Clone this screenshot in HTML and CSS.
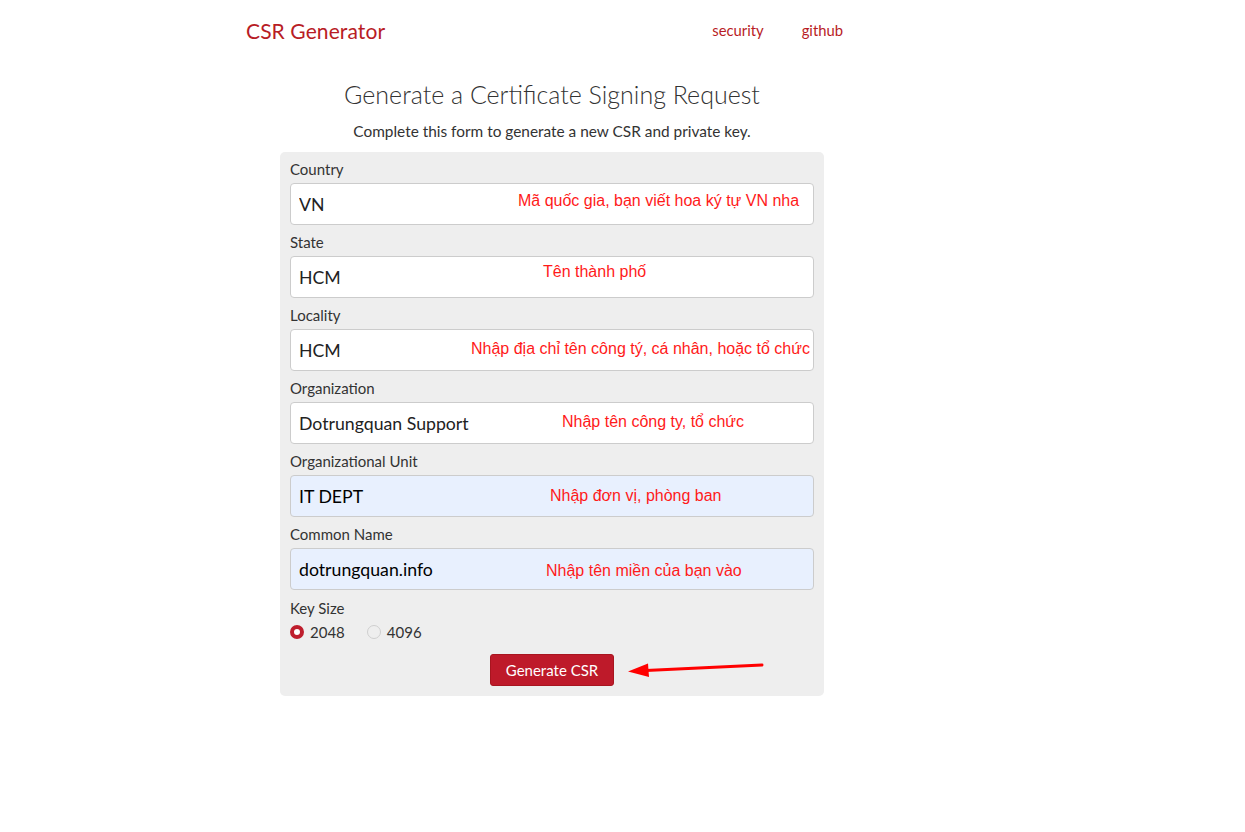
FILE: index.html
```html
<!DOCTYPE html>
<html lang="vi">
<head>
<meta charset="utf-8">
<title>CSR Generator</title>
<link rel="stylesheet" href="styles.css">
</head>
<body>
<div class="page">
  <header class="navbar">
    <a class="brand" href="#">CSR Generator</a>
    <nav class="nav-links">
      <a href="#">security</a>
      <a href="#">github</a>
    </nav>
  </header>
  <main class="main">
    <h1 class="title">Generate a Certificate Signing Request</h1>
    <p class="lead">Complete this form to generate a new CSR and private key.</p>
    <form class="panel">
      <div class="group">
        <label class="label">Country</label>
        <div class="field">
          <input class="input" type="text" value="VN">
          <span class="note note-country">Mã quốc gia, bạn viết hoa ký tự VN nha</span>
        </div>
      </div>
      <div class="group">
        <label class="label">State</label>
        <div class="field">
          <input class="input" type="text" value="HCM">
          <span class="note note-state">Tên thành phố</span>
        </div>
      </div>
      <div class="group">
        <label class="label">Locality</label>
        <div class="field">
          <input class="input" type="text" value="HCM">
          <span class="note note-locality">Nhập địa chỉ tên công tý, cá nhân, hoặc tổ chức</span>
        </div>
      </div>
      <div class="group">
        <label class="label">Organization</label>
        <div class="field">
          <input class="input" type="text" value="Dotrungquan Support">
          <span class="note note-org">Nhập tên công ty, tổ chức</span>
        </div>
      </div>
      <div class="group">
        <label class="label">Organizational Unit</label>
        <div class="field">
          <input class="input input-filled" type="text" value="IT DEPT">
          <span class="note note-unit">Nhập đơn vị, phòng ban</span>
        </div>
      </div>
      <div class="group">
        <label class="label">Common Name</label>
        <div class="field">
          <input class="input input-filled" type="text" value="dotrungquan.info">
          <span class="note note-cn">Nhập tên miền của bạn vào</span>
        </div>
      </div>
      <div class="keysize">
        <label class="label">Key Size</label>
        <div class="radios">
          <label class="radio"><span class="dot dot-on"></span>2048</label>
          <label class="radio"><span class="dot"></span>4096</label>
        </div>
      </div>
      <div class="actions">
        <button class="btn" type="button">Generate CSR</button>
        <svg class="arrow" width="140" height="20" viewBox="0 0 140 20">
          <line x1="18" y1="10.5" x2="134" y2="5" stroke="#ff0000" stroke-width="3" stroke-linecap="round"/>
          <polygon points="0,11.5 20,3.5 21,17" fill="#ff0000"/>
        </svg>
      </div>
    </form>
  </main>
</div>
</body>
</html>
```

FILE: styles.css
```css
* { box-sizing: border-box; }

html, body {
  margin: 0;
  padding: 0;
  background: #ffffff;
}

body {
  font-family: "Lato", "Noto Sans", "Liberation Sans", sans-serif;
  color: #333333;
  font-size: 15px;
}

.page {
  padding-left: 246px;
}

.navbar {
  width: 597px;
  height: 60px;
  display: flex;
  align-items: center;
  justify-content: space-between;
}

.brand {
  color: #b81c25;
  text-decoration: none;
  font-size: 21px;
  letter-spacing: 0.1px;
}

.nav-links {
  display: flex;
  gap: 38px;
}

.nav-links a {
  color: #b81c25;
  text-decoration: none;
  font-size: 14.8px;
}

.main {
  margin-left: 34px;
  width: 544px;
}

.title {
  margin: 17px 0 0;
  text-align: center;
  font-size: 25px;
  font-weight: 300;
  line-height: 34px;
  color: #333333;
}

.lead {
  margin: 10px 0 0;
  text-align: center;
  font-size: 15.4px;
  line-height: 20px;
  color: #333333;
}

.panel {
  margin-top: 11px;
  background: #eeeeee;
  border-radius: 5px;
  padding: 7px 10px 10px;
}

.group {
  margin-bottom: 8px;
}

.label {
  display: block;
  font-size: 15px;
  line-height: 20px;
  margin-bottom: 4px;
  color: #333333;
}

.field {
  position: relative;
}

.input {
  display: block;
  width: 100%;
  height: 42px;
  border: 1px solid #cccccc;
  border-radius: 4px;
  background: #ffffff;
  padding: 0 8px;
  font-family: "Lato", "Noto Sans", "Liberation Sans", sans-serif;
  font-size: 17.7px;
  color: #222222;
}

.input-filled {
  background: #e8f0fe;
  color: #000000;
}

.note {
  position: absolute;
  font-family: "Liberation Sans", Arial, sans-serif;
  font-size: 16px;
  line-height: 18px;
  color: #ff1a1a;
  white-space: nowrap;
}

.note-country { left: 228px; top: 9px; }
.note-state { left: 253px; top: 7px; }
.note-locality { left: 181px; top: 11px; }
.note-org { left: 272px; top: 11px; }
.note-unit { left: 260px; top: 12px; }
.note-cn { left: 256px; top: 14px; }

.group + .group {
  margin-top: -1px;
}

.radios {
  display: flex;
  gap: 22px;
  margin-top: 4px;
  height: 20px;
  align-items: center;
}

.radio {
  display: flex;
  align-items: center;
  gap: 6px;
  font-size: 15px;
  color: #333333;
}

.dot {
  width: 14px;
  height: 14px;
  border-radius: 50%;
  border: 1px solid #cfcfcf;
  background: #eeeeee;
}

.dot-on {
  border: 4px solid #be1e2d;
  background: #ffffff;
}

.actions {
  position: relative;
  display: flex;
  justify-content: center;
  margin-top: 12px;
}

.btn {
  width: 124px;
  height: 32px;
  background: #be1a2a;
  color: #ffffff;
  border: 1px solid #a8151f;
  border-radius: 3px;
  font-family: "Lato", "Noto Sans", "Liberation Sans", sans-serif;
  font-size: 15px;
  padding: 0;
}

.arrow {
  position: absolute;
  left: 338px;
  top: 6px;
}
```
